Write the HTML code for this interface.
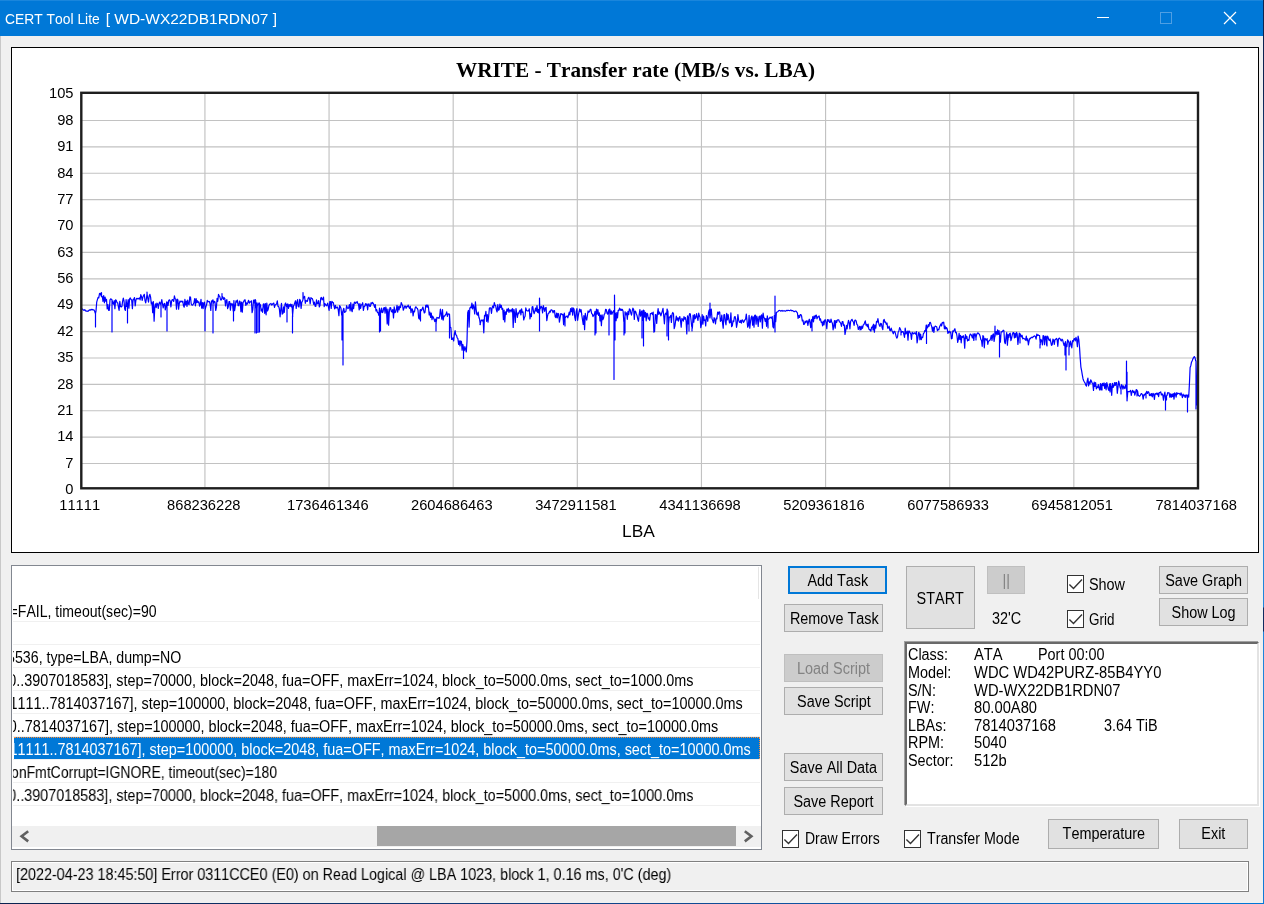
<!DOCTYPE html>
<html lang="en"><head><meta charset="utf-8"><title>CERT Tool Lite</title><style>
html,body{margin:0;padding:0}
body{font-kerning:none;width:1264px;height:904px;background:#f0f0f0;position:relative;overflow:hidden;font-family:"Liberation Sans",Arial,sans-serif;font-size:16px;color:#000}
#w{position:absolute;left:0;top:0;width:1264px;height:904px;will-change:transform}
#tb{position:absolute;left:0;top:0;width:1263px;height:36px;background:#0078d7;border-top:1px solid #1a86dc;box-sizing:border-box}
#title{position:absolute;left:5px;top:9px;font-size:15.5px;line-height:20px;color:#fff;white-space:nowrap;transform-origin:left center}
#chartbox{position:absolute;left:11px;top:47px;width:1248px;height:506px;box-sizing:border-box;border:1px solid #000;background:#fff}
.t{position:absolute;white-space:nowrap;font-size:16px;line-height:20px;transform-origin:left center}
.btn{position:absolute;box-sizing:border-box;border:1px solid #adadad;background:#e1e1e1;text-align:center;white-space:nowrap;font-size:16px;color:#000}
.btn.focus{border:2px solid #0078d7}
.btn.dis{background:#cccccc;border-color:#bfbfbf;color:#838383}
.chk{position:absolute;width:17px;height:18px;box-sizing:border-box;border:1px solid #333;background:#fff}
.chk svg{position:absolute;left:0;top:0}
#list{position:absolute;left:11px;top:565px;width:751px;height:285px;box-sizing:border-box;border:1px solid #828790;background:#fff;overflow:hidden}
#listclip{position:absolute;left:1px;top:0;width:747px;height:258px;overflow:hidden}
.rl{position:absolute;left:1px;width:747px;height:1px;background:#f0f0f0}
.sel{position:absolute;left:2px;top:0;width:746px;height:22px;box-sizing:border-box;background:#0078d7;border-top:1px dotted #ff8c32;border-right:1px dotted #ff8c32}
#hsb{position:absolute;left:0;top:260px;width:749px;height:21px;background:#f0f0f0}
#thumb{position:absolute;left:365px;top:0;width:359px;height:20px;background:#a6a6a6}
#info{position:absolute;left:905px;top:642px;width:354px;height:164px;box-sizing:border-box;background:#fff;border:2px solid;border-color:#696969 #e3e3e3 #e3e3e3 #696969;box-shadow:-1px -1px 0 #a0a0a0, 1px 1px 0 #fff;overflow:hidden}
#status{position:absolute;left:11px;top:861px;width:1238px;height:31px;box-sizing:border-box;border:1px solid #808080;box-shadow:inset 0 0 0 1px #fff}
#edgeL{position:absolute;left:0;top:36px;width:1px;height:868px;background:#c8c8c8}
#edgeR2{position:absolute;left:1263px;top:0;width:1px;height:904px;background:linear-gradient(to bottom,#0c2350 0,#0c2350 90px,#1b6fc2 230px,#1f86dc 300px,#1f86dc 607px,#102c60 608px,#102c60 631px,#1f86dc 632px,#0f7ad6 904px)}
#edgeB{position:absolute;left:0;top:903px;width:1264px;height:1px;background:linear-gradient(to right,#0b2350 0,#103c7c 40%,#0f5fb4 75%,#0078d7 100%)}
</style></head><body>
<div id="w">
<div id="tb"></div>
<div id="title"><span style="display:inline-block;transform:scaleX(0.894);transform-origin:left center">CERT Tool Lite</span><span style="position:absolute;left:100.7px;top:0">[ WD-WX22DB1RDN07 ]</span></div>
<svg style="position:absolute;left:1090px;top:0" width="170" height="36" viewBox="1090 0 170 36"><path d="M1097 17.5H1109" stroke="#fff" stroke-width="1"/><rect x="1160.5" y="12.5" width="11" height="11" fill="none" stroke="#4f9fe3" stroke-width="1"/><path d="M1224 12L1236 24M1236 12L1224 24" stroke="#fff" stroke-width="1.2"/></svg>
<div id="chartbox"></div>
<svg width="1264" height="904" viewBox="0 0 1264 904" style="position:absolute;left:0;top:0;font-kerning:none" font-family="Liberation Sans, Arial, sans-serif">
<path d="M204.93 94V487M329.06 94V487M453.19 94V487M577.32 94V487M701.45 94V487M825.58 94V487M949.71 94V487M1073.84 94V487M82 120.48H1197M82 146.87H1197M82 173.25H1197M82 199.64H1197M82 226.03H1197M82 252.41H1197M82 278.80H1197M82 305.18H1197M82 331.56H1197M82 357.95H1197M82 384.34H1197M82 410.72H1197M82 437.11H1197M82 463.49H1197" stroke="#c2c2c2" stroke-width="1.15" fill="none"/>
<path d="M82.0 308.6 L82.7 309.4 L83.4 310.2 L84.1 310.2 L84.8 309.6 L85.5 311.0 L86.2 310.9 L86.9 311.3 L87.6 311.1 L88.3 311.2 L89.0 310.2 L89.7 309.9 L90.4 310.1 L91.1 309.3 L91.8 309.9 L92.5 309.4 L93.2 310.0 L93.9 309.9 L94.6 311.0 L95.3 313.3 L95.5 313.3 L95.5 327.0 L95.5 313.3 L96.0 311.1 L96.7 302.2 L97.4 299.6 L98.1 297.4 L98.8 297.9 L99.5 293.5 L100.2 293.2 L100.9 295.3 L101.6 296.7 L101.5 292.5 L101.5 292.5 L101.5 296.7 L102.3 296.5 L103.0 301.3 L103.7 295.5 L104.4 302.8 L105.1 297.0 L105.8 301.1 L106.5 299.3 L107.2 308.9 L107.9 304.6 L108.6 310.3 L109.3 310.3 L110.0 299.8 L110.7 298.9 L111.4 299.2 L112.1 300.2 L112.0 300.2 L112.0 332.0 L112.0 300.2 L112.8 302.9 L113.5 304.2 L114.2 300.6 L114.9 308.7 L115.6 299.8 L116.3 300.4 L117.0 302.6 L117.7 302.9 L118.4 306.9 L119.1 310.4 L119.8 301.3 L120.5 306.6 L121.2 307.0 L121.9 306.5 L122.6 301.3 L123.3 298.2 L124.0 300.8 L124.7 308.9 L125.4 310.5 L126.1 299.7 L126.8 306.4 L127.5 304.4 L127.5 304.4 L127.5 323.0 L127.5 304.4 L128.2 299.7 L128.9 308.2 L129.6 298.8 L130.3 297.9 L131.0 299.4 L131.7 300.2 L132.4 308.7 L133.1 299.4 L133.8 299.6 L134.5 297.5 L135.2 306.0 L135.9 300.2 L136.6 298.4 L137.3 298.4 L138.0 299.1 L138.7 298.4 L139.4 297.9 L140.1 299.9 L140.8 294.7 L141.5 296.6 L142.2 300.5 L142.9 297.1 L143.6 295.6 L144.3 294.3 L145.0 300.5 L145.7 302.9 L146.4 298.6 L147.1 293.5 L147.0 292.0 L147.0 292.0 L147.0 293.5 L147.8 298.5 L148.5 302.1 L149.2 295.9 L149.9 294.3 L150.6 297.1 L151.3 304.0 L152.0 302.1 L152.7 312.6 L153.4 301.7 L154.1 321.2 L154.8 307.1 L155.5 303.8 L156.2 307.6 L156.9 303.0 L157.6 304.1 L158.3 308.3 L159.0 303.5 L159.7 302.1 L160.4 304.2 L161.1 303.6 L161.0 303.6 L161.0 317.0 L161.0 303.6 L161.8 299.6 L162.5 304.0 L163.2 307.8 L163.9 303.9 L164.6 303.4 L165.3 310.0 L166.0 305.8 L166.7 301.9 L167.0 301.9 L167.0 331.0 L167.0 301.9 L167.4 302.3 L168.1 305.5 L168.8 300.2 L169.5 299.9 L170.2 301.0 L170.9 306.9 L171.6 301.3 L172.3 299.5 L173.0 299.8 L173.7 301.5 L174.4 295.8 L175.1 298.7 L175.8 299.4 L176.5 309.1 L177.2 299.2 L177.9 299.9 L178.6 309.1 L179.3 303.5 L180.0 301.0 L180.7 301.8 L181.4 301.1 L182.1 302.0 L182.8 301.2 L183.5 305.8 L184.2 307.2 L184.9 299.3 L185.6 305.0 L186.3 301.1 L187.0 306.5 L187.7 300.1 L188.4 304.0 L189.1 304.6 L189.8 296.9 L190.5 297.0 L191.2 303.7 L191.9 305.1 L192.6 305.2 L193.3 304.1 L194.0 302.4 L194.7 298.7 L195.4 305.8 L196.1 298.7 L196.8 302.7 L197.5 300.7 L198.2 302.6 L198.9 301.9 L199.6 306.1 L200.3 304.4 L201.0 299.3 L201.7 308.1 L202.4 302.6 L203.1 308.6 L203.8 302.9 L204.5 302.1 L205.2 309.7 L205.0 309.7 L205.0 331.0 L205.0 309.7 L205.9 306.9 L206.6 304.6 L207.3 300.4 L208.0 301.8 L208.7 301.4 L209.4 301.5 L210.1 304.0 L210.8 310.5 L211.5 300.9 L212.2 301.6 L212.9 299.8 L213.0 299.8 L213.0 333.0 L213.0 299.8 L213.6 303.1 L214.3 301.3 L215.0 302.0 L215.7 310.5 L216.4 307.4 L217.1 298.4 L217.8 301.3 L218.5 294.4 L219.2 295.8 L219.9 296.9 L220.6 299.8 L221.3 300.0 L222.0 297.9 L222.0 293.5 L222.0 293.5 L222.0 297.9 L222.7 296.8 L223.4 299.4 L224.1 297.7 L224.8 298.5 L225.5 306.0 L226.2 300.6 L226.9 299.7 L227.6 308.6 L228.3 306.7 L229.0 301.7 L229.7 301.7 L230.4 310.1 L231.1 303.4 L231.8 304.9 L232.5 303.9 L233.2 311.0 L233.5 311.0 L233.5 321.0 L233.5 311.0 L233.9 300.6 L234.6 310.6 L235.3 306.1 L236.0 300.9 L236.7 302.1 L237.4 300.0 L238.1 305.6 L238.8 305.7 L239.5 301.0 L240.2 301.8 L240.9 311.7 L241.6 302.0 L242.3 312.2 L243.0 302.7 L243.7 301.7 L244.4 300.1 L245.1 299.8 L245.8 305.5 L246.5 302.8 L247.2 304.1 L247.9 302.3 L248.6 300.3 L249.3 303.2 L250.0 301.9 L250.7 302.0 L251.4 300.8 L252.1 312.6 L252.8 309.7 L253.5 300.2 L254.2 303.0 L254.9 299.5 L255.0 299.5 L255.0 333.0 L255.0 299.5 L255.6 300.1 L256.3 308.1 L256.5 308.1 L256.5 333.0 L256.5 308.1 L257.0 302.9 L257.7 305.6 L258.0 305.6 L258.0 332.5 L258.0 305.6 L258.4 304.2 L259.1 302.8 L259.8 304.2 L259.5 304.2 L259.5 332.0 L259.5 304.2 L260.5 304.7 L261.2 311.0 L261.9 309.1 L262.6 312.3 L263.3 304.0 L264.0 303.8 L264.7 313.3 L265.4 303.6 L266.1 314.8 L266.8 303.0 L267.5 310.9 L268.2 309.2 L268.9 305.6 L269.6 304.2 L270.3 304.0 L271.0 303.5 L271.7 305.1 L272.4 304.3 L273.1 303.5 L273.8 303.1 L274.5 307.4 L275.2 304.9 L275.9 304.5 L276.6 303.8 L277.3 300.9 L278.0 306.4 L278.7 306.5 L279.4 309.2 L280.1 316.8 L280.8 309.3 L281.5 303.3 L282.2 314.1 L282.9 313.6 L283.6 306.8 L284.3 312.3 L285.0 304.1 L285.7 303.0 L286.4 306.5 L287.1 304.6 L287.0 304.6 L287.0 322.0 L287.0 304.6 L287.8 303.8 L288.5 308.3 L289.2 304.5 L289.9 306.2 L290.6 304.1 L291.3 306.9 L292.0 304.3 L292.7 316.4 L292.5 316.4 L292.5 333.0 L292.5 316.4 L293.4 306.3 L294.1 304.7 L294.8 302.6 L295.5 300.8 L296.2 308.4 L296.9 302.1 L297.6 299.7 L298.3 306.7 L299.0 307.0 L299.7 299.4 L300.4 300.5 L301.1 308.4 L301.8 302.3 L302.5 301.0 L303.2 298.9 L303.0 292.5 L303.0 292.5 L303.0 298.9 L303.9 297.5 L304.6 296.3 L305.3 303.3 L306.0 300.4 L306.7 301.2 L307.4 301.4 L308.1 298.3 L308.8 297.3 L309.5 299.0 L310.2 303.8 L310.9 297.7 L311.6 298.3 L312.3 298.6 L313.0 300.6 L313.7 304.3 L314.4 302.1 L315.1 306.1 L315.8 306.4 L316.5 299.8 L317.2 303.8 L317.9 303.4 L318.6 300.7 L319.3 306.9 L320.0 305.4 L320.7 298.2 L321.4 297.4 L322.1 299.9 L322.8 298.9 L323.5 297.1 L324.2 306.7 L324.9 303.7 L325.6 304.4 L326.3 305.8 L327.0 305.0 L327.7 303.1 L328.4 306.9 L329.1 310.4 L329.8 301.6 L330.5 301.7 L331.2 308.4 L331.9 301.4 L332.6 302.2 L333.3 302.5 L334.0 306.0 L334.7 308.8 L335.4 305.3 L336.1 308.0 L336.8 307.5 L337.5 307.1 L338.2 309.5 L338.9 315.7 L339.6 305.7 L340.3 306.7 L341.0 308.4 L341.7 315.3 L342.0 315.3 L342.0 340.0 L342.0 315.3 L342.4 312.5 L343.1 310.6 L343.0 310.6 L343.0 365.0 L343.0 310.6 L343.8 308.3 L344.5 312.3 L345.2 312.0 L345.9 311.3 L346.6 305.6 L347.3 307.5 L348.0 308.6 L348.7 307.6 L349.4 304.6 L350.1 310.8 L350.8 302.7 L351.5 309.7 L352.2 311.7 L352.9 304.1 L353.6 308.6 L354.3 302.6 L355.0 302.1 L355.7 303.4 L356.4 302.5 L357.1 301.5 L357.8 303.5 L358.5 304.2 L359.2 309.9 L359.9 303.6 L360.6 308.3 L361.3 304.9 L362.0 304.6 L362.7 302.7 L363.4 310.5 L364.1 306.3 L364.8 306.3 L365.5 303.7 L366.2 305.2 L366.9 303.9 L367.6 309.8 L368.3 304.4 L369.0 303.8 L369.7 306.4 L370.4 306.4 L371.1 302.7 L371.8 303.8 L372.5 302.4 L373.2 303.3 L373.9 304.8 L374.6 307.4 L375.3 304.5 L376.0 311.0 L376.7 309.6 L377.4 312.4 L378.1 312.7 L378.8 315.3 L379.5 308.1 L379.5 308.1 L379.5 332.0 L379.5 308.1 L380.2 312.2 L380.5 312.2 L380.5 331.0 L380.5 312.2 L380.9 312.4 L381.6 308.0 L382.3 312.6 L383.0 312.0 L383.7 308.0 L384.4 307.6 L385.1 313.2 L385.8 307.0 L386.5 310.0 L387.2 323.9 L387.9 309.0 L388.6 325.2 L389.3 312.0 L390.0 307.6 L390.7 307.9 L391.4 311.6 L392.1 312.1 L392.8 309.5 L393.5 317.9 L394.2 306.8 L394.9 312.7 L395.6 312.0 L396.3 309.5 L397.0 305.3 L397.7 312.1 L398.4 306.5 L399.1 309.8 L399.8 306.0 L400.5 307.6 L401.2 302.6 L401.9 304.3 L402.6 305.4 L403.3 310.2 L404.0 308.4 L404.7 306.0 L405.4 306.2 L406.1 308.4 L406.8 306.4 L407.5 306.7 L408.2 305.1 L408.9 307.3 L409.6 308.5 L410.3 306.2 L411.0 312.6 L411.7 308.9 L412.4 309.1 L413.1 316.0 L413.8 311.0 L414.5 311.9 L415.2 307.8 L415.9 306.7 L416.6 308.0 L417.3 308.3 L418.0 310.3 L418.7 318.2 L419.4 319.1 L420.1 309.8 L420.8 309.7 L420.5 309.7 L420.5 321.0 L420.5 309.7 L421.5 310.6 L422.2 308.8 L422.9 307.0 L423.6 310.1 L424.3 313.0 L425.0 312.3 L425.7 305.6 L426.4 305.1 L427.1 307.3 L427.8 305.0 L428.5 307.5 L429.2 315.0 L429.9 312.1 L430.6 317.4 L431.3 313.2 L432.0 319.6 L432.7 316.2 L433.4 317.5 L434.1 319.3 L434.8 321.6 L435.5 319.2 L436.2 323.4 L436.0 323.4 L436.0 331.0 L436.0 323.4 L436.9 317.3 L437.6 318.0 L438.3 317.7 L439.0 318.4 L439.7 316.1 L440.4 309.1 L441.1 313.7 L441.8 319.1 L442.5 309.5 L443.2 320.2 L443.9 316.0 L444.6 316.1 L445.3 315.1 L446.0 314.2 L446.7 311.9 L447.4 316.3 L448.1 313.9 L448.8 314.2 L449.5 314.2 L449.5 314.2 L449.5 338.0 L449.5 314.2 L450.2 327.4 L450.9 327.5 L451.6 339.4 L452.3 339.3 L453.0 337.8 L453.7 341.0 L454.4 334.1 L455.1 330.5 L455.8 334.8 L456.5 335.2 L457.2 337.9 L457.9 338.6 L458.6 344.5 L459.3 340.9 L460.0 346.0 L460.7 340.9 L461.4 341.4 L462.1 350.2 L462.8 344.4 L463.5 347.6 L463.5 347.6 L463.5 358.5 L463.5 347.6 L464.2 350.7 L464.9 346.7 L465.6 349.1 L466.3 352.0 L467.0 341.2 L467.7 312.6 L468.4 310.4 L469.1 327.1 L469.8 308.3 L470.5 307.1 L471.2 307.8 L471.9 303.1 L472.6 308.9 L473.3 304.8 L474.0 307.4 L474.7 314.0 L475.4 301.9 L476.1 309.0 L476.8 314.4 L477.5 315.1 L478.2 312.2 L478.9 317.3 L479.6 319.2 L480.3 324.6 L480.0 324.0 L480.0 324.0 L480.0 324.6 L481.0 320.9 L481.7 320.0 L482.4 320.9 L483.1 319.7 L483.8 332.8 L484.5 315.4 L485.2 315.9 L485.9 311.3 L486.6 321.3 L487.3 314.5 L488.0 322.2 L488.7 315.8 L489.4 308.2 L490.1 307.7 L490.8 308.4 L491.5 313.3 L492.2 307.2 L492.9 305.8 L493.6 307.9 L494.3 302.6 L495.0 305.2 L495.7 305.8 L496.4 309.9 L497.1 312.0 L497.8 304.6 L498.5 310.2 L499.2 309.8 L499.9 304.1 L500.6 307.7 L501.3 305.4 L502.0 309.3 L502.7 308.4 L503.4 319.7 L504.1 310.0 L504.8 321.9 L505.5 311.8 L506.2 314.3 L506.9 309.2 L507.6 311.1 L508.3 308.4 L509.0 312.4 L509.7 309.8 L510.4 310.3 L511.1 311.9 L511.8 309.5 L512.5 308.6 L513.2 327.5 L513.9 309.4 L514.6 313.2 L515.3 322.5 L516.0 308.6 L516.7 313.4 L517.4 317.5 L518.1 312.8 L518.8 313.6 L519.5 311.0 L520.2 310.0 L520.9 314.9 L521.6 308.8 L522.3 312.3 L523.0 311.8 L523.7 320.0 L524.4 317.5 L525.1 316.2 L525.8 307.8 L526.5 310.4 L527.2 310.8 L527.9 310.8 L528.6 311.0 L529.3 308.8 L530.0 319.0 L530.7 313.8 L531.4 316.7 L532.1 307.1 L532.8 306.6 L533.5 311.6 L534.2 313.7 L534.9 310.9 L535.6 308.0 L536.3 311.3 L537.0 305.6 L537.7 312.5 L538.4 309.3 L539.1 313.5 L539.8 310.0 L539.5 298.0 L539.5 298.0 L539.5 310.0 L539.5 310.0 L539.5 331.0 L539.5 310.0 L540.5 307.9 L541.2 306.3 L541.9 307.6 L542.6 313.0 L543.3 305.7 L544.0 308.1 L544.7 311.3 L545.4 308.0 L546.1 307.3 L546.8 320.7 L547.5 316.2 L548.2 313.4 L548.9 313.2 L549.6 311.2 L550.3 312.0 L551.0 309.9 L551.7 309.8 L552.4 310.7 L553.1 312.8 L553.8 310.7 L554.5 310.6 L555.2 316.9 L555.9 317.5 L556.6 313.1 L557.3 317.9 L558.0 313.4 L558.7 314.0 L559.4 322.2 L560.1 317.8 L560.8 313.6 L561.5 313.8 L562.2 314.7 L562.9 314.3 L563.6 324.6 L564.3 313.1 L565.0 318.0 L565.0 318.0 L565.0 326.0 L565.0 318.0 L565.7 317.2 L566.4 316.5 L567.1 315.9 L567.8 317.8 L568.5 315.4 L569.2 312.2 L569.9 315.0 L570.6 308.6 L571.3 311.6 L572.0 307.6 L572.7 315.1 L573.4 308.1 L574.1 309.3 L574.8 317.4 L575.5 320.7 L576.2 311.3 L576.9 308.7 L577.6 320.3 L578.3 315.6 L579.0 311.8 L579.7 309.0 L580.4 311.9 L581.1 309.7 L581.8 315.2 L582.5 319.7 L583.2 324.4 L583.9 315.5 L584.6 329.6 L585.3 313.3 L586.0 318.6 L586.7 320.1 L587.4 315.4 L588.1 310.9 L588.8 312.3 L589.5 311.6 L590.2 309.3 L590.9 309.4 L591.6 313.4 L592.3 314.2 L593.0 316.6 L593.7 315.2 L594.4 314.0 L595.1 311.3 L595.0 311.3 L595.0 335.0 L595.0 311.3 L595.8 316.0 L596.0 316.0 L596.0 333.0 L596.0 316.0 L596.5 309.0 L597.2 314.1 L597.9 309.5 L598.6 315.4 L599.3 312.9 L600.0 321.0 L600.7 315.0 L601.4 325.6 L602.1 314.8 L602.8 319.6 L603.5 318.3 L604.2 314.4 L604.9 313.6 L605.6 309.4 L606.3 309.6 L607.0 313.2 L607.7 314.2 L608.4 311.3 L609.1 309.6 L609.0 309.6 L609.0 335.0 L609.0 309.6 L609.8 309.1 L610.5 314.2 L611.2 310.8 L611.9 314.3 L612.6 312.4 L613.3 311.4 L614.0 310.4 L614.0 310.4 L614.0 379.5 L614.0 310.4 L614.7 313.5 L614.5 295.0 L614.5 295.0 L614.5 313.5 L615.0 313.5 L615.0 340.0 L615.0 313.5 L615.4 313.2 L616.1 320.6 L616.8 312.7 L617.5 318.0 L618.2 310.4 L618.9 310.3 L619.6 308.1 L620.3 310.3 L621.0 309.1 L621.7 310.4 L622.4 309.4 L623.1 311.2 L623.8 321.4 L624.0 321.4 L624.0 335.0 L624.0 321.4 L624.5 322.8 L625.2 311.9 L625.0 311.9 L625.0 333.0 L625.0 311.9 L625.9 314.8 L626.6 312.8 L627.3 319.3 L628.0 311.3 L628.7 314.6 L629.4 308.9 L630.1 309.4 L630.8 313.0 L631.5 315.1 L632.2 311.0 L632.9 308.2 L633.6 309.3 L634.3 319.4 L635.0 311.0 L635.7 311.7 L636.4 313.9 L637.1 315.8 L637.8 319.2 L638.5 321.3 L639.2 314.4 L639.9 309.6 L640.6 316.1 L641.3 312.1 L642.0 310.8 L642.0 310.8 L642.0 338.0 L642.0 310.8 L642.7 320.4 L643.4 310.1 L643.5 310.1 L643.5 346.0 L643.5 310.1 L644.1 310.6 L644.8 317.2 L645.5 312.4 L646.2 320.8 L646.9 313.3 L647.6 313.9 L648.3 319.0 L649.0 317.8 L649.7 320.3 L650.4 313.6 L651.1 313.6 L651.8 312.8 L652.5 314.6 L653.2 312.2 L653.9 332.2 L654.6 331.4 L655.3 314.5 L656.0 314.8 L656.7 323.5 L657.4 314.0 L658.1 308.6 L658.8 314.4 L659.5 312.0 L660.2 313.5 L660.9 315.8 L661.6 313.4 L662.3 311.1 L663.0 308.3 L663.7 315.8 L664.4 323.8 L665.1 314.2 L665.8 313.1 L666.5 314.7 L667.2 309.1 L667.0 309.1 L667.0 336.0 L667.0 309.1 L667.9 311.3 L668.6 324.4 L668.5 324.4 L668.5 340.0 L668.5 324.4 L669.3 317.0 L670.0 317.2 L670.7 315.4 L671.4 322.5 L672.1 313.9 L672.8 312.5 L673.5 313.8 L674.2 328.7 L674.9 326.2 L675.6 320.8 L676.3 316.2 L677.0 320.1 L677.7 317.9 L678.4 321.1 L679.1 317.8 L679.8 316.6 L680.5 320.7 L681.2 327.1 L681.9 318.4 L682.6 319.6 L683.3 321.1 L684.0 316.6 L684.7 319.2 L685.4 317.5 L686.1 321.2 L686.8 334.0 L687.5 315.8 L688.2 324.0 L688.9 316.5 L689.0 316.5 L689.0 331.0 L689.0 316.5 L689.6 313.7 L690.3 313.8 L691.0 319.8 L691.7 326.5 L692.0 326.5 L692.0 331.0 L692.0 326.5 L692.4 328.1 L693.1 315.1 L693.8 322.2 L694.5 314.7 L695.2 318.7 L695.9 317.3 L696.6 313.7 L697.3 317.7 L698.0 320.5 L698.7 313.2 L699.4 316.1 L700.1 317.3 L700.8 327.7 L701.5 324.3 L702.2 314.7 L702.9 324.1 L703.6 316.1 L704.3 320.5 L705.0 319.9 L705.7 325.9 L706.4 315.5 L707.1 318.1 L707.8 321.3 L708.5 312.6 L709.2 309.8 L709.9 317.9 L710.0 303.0 L710.0 303.0 L710.0 317.9 L710.6 313.9 L711.3 309.2 L712.0 318.8 L712.7 320.6 L713.4 322.8 L714.1 317.6 L714.8 319.4 L715.5 323.9 L716.2 318.2 L716.9 318.8 L717.6 312.2 L718.3 314.3 L719.0 311.8 L719.7 312.1 L720.4 321.3 L721.1 320.6 L721.8 315.1 L722.5 322.6 L723.2 328.1 L723.9 314.8 L724.6 314.6 L725.3 321.7 L726.0 324.8 L726.7 313.3 L727.4 319.9 L728.1 314.7 L728.8 319.1 L729.5 323.0 L730.2 322.5 L730.9 312.8 L731.6 326.6 L732.3 325.9 L733.0 320.9 L733.7 321.6 L734.4 317.0 L735.1 316.6 L735.8 319.5 L736.5 327.3 L737.2 323.6 L737.9 314.5 L738.6 319.9 L739.3 322.2 L740.0 322.5 L740.7 320.4 L741.4 323.1 L742.1 319.9 L742.8 320.2 L743.5 322.4 L744.2 321.2 L744.9 319.9 L745.6 319.1 L746.3 314.0 L747.0 320.6 L747.7 327.2 L748.4 325.5 L749.1 315.3 L749.8 328.1 L750.5 321.5 L751.2 317.3 L751.9 316.0 L752.6 325.1 L753.3 316.9 L754.0 327.2 L754.7 315.4 L755.4 315.2 L756.1 324.2 L756.8 316.1 L757.5 319.2 L758.2 326.5 L758.9 316.8 L759.6 316.1 L760.3 322.0 L761.0 315.6 L761.7 314.8 L762.4 328.1 L763.1 313.1 L763.8 317.5 L764.5 318.1 L765.2 321.4 L765.9 318.5 L766.6 326.3 L767.3 315.8 L768.0 319.9 L768.0 319.9 L768.0 328.0 L768.0 319.9 L768.7 319.0 L769.4 318.3 L770.1 317.1 L770.8 317.8 L771.5 318.2 L772.2 316.5 L772.9 326.7 L773.6 327.9 L774.3 315.6 L775.0 315.5 L775.0 296.0 L775.0 296.0 L775.0 315.5 L775.0 315.5 L775.0 332.0 L775.0 315.5 L775.7 321.6 L776.4 312.4 L777.1 312.0 L777.8 311.7 L778.5 310.8 L779.2 310.4 L779.9 310.5 L780.6 311.1 L781.3 310.9 L782.0 310.4 L782.7 311.1 L783.4 310.8 L784.1 310.9 L784.8 310.9 L785.5 311.2 L786.2 310.8 L786.9 310.3 L787.6 310.6 L788.3 310.3 L789.0 310.5 L789.7 310.7 L790.4 310.2 L791.1 310.1 L791.8 310.8 L792.5 310.5 L793.2 311.1 L793.9 311.6 L794.6 311.6 L795.3 311.0 L796.0 311.2 L796.7 312.0 L797.4 312.9 L798.1 318.3 L798.8 315.5 L799.5 317.5 L800.2 314.6 L800.9 314.6 L801.6 316.1 L802.3 321.0 L803.0 320.2 L803.7 324.5 L804.4 324.2 L805.1 321.2 L805.8 322.7 L806.5 320.9 L807.2 320.8 L807.9 325.3 L808.6 321.3 L809.3 319.2 L810.0 322.7 L810.7 327.6 L811.4 319.5 L812.1 322.1 L812.0 322.1 L812.0 331.0 L812.0 322.1 L812.8 316.7 L813.5 321.8 L814.2 315.8 L814.9 318.5 L815.6 315.5 L816.3 315.1 L817.0 318.9 L817.7 316.9 L818.4 317.0 L819.1 315.9 L819.8 320.2 L820.5 318.9 L821.2 322.3 L821.9 322.1 L822.6 325.9 L823.3 321.2 L824.0 325.0 L824.7 320.1 L825.4 319.8 L826.1 322.3 L826.8 328.7 L827.5 319.5 L828.2 321.2 L828.9 319.7 L829.6 322.5 L830.3 322.5 L831.0 319.2 L831.7 322.0 L832.4 323.2 L833.1 329.8 L833.8 325.9 L834.5 320.5 L835.2 328.1 L835.9 320.5 L836.6 322.5 L837.3 320.0 L838.0 319.8 L838.7 319.8 L839.4 321.7 L840.1 322.3 L840.8 323.5 L841.5 326.3 L842.2 321.5 L842.9 321.7 L843.6 325.5 L844.3 324.9 L845.0 334.5 L845.0 329.0 L845.0 329.0 L845.0 334.5 L845.7 330.9 L846.4 325.3 L847.1 328.9 L847.8 323.8 L848.5 320.3 L849.2 322.7 L849.9 328.8 L850.6 321.6 L851.3 320.2 L852.0 319.3 L852.7 321.1 L853.4 322.0 L854.1 325.5 L854.8 320.4 L855.5 320.2 L856.2 321.2 L856.9 324.5 L857.6 324.9 L858.3 329.5 L859.0 327.8 L859.7 326.3 L860.0 326.3 L860.0 330.0 L860.0 326.3 L860.4 326.9 L861.1 329.6 L861.8 326.2 L862.5 328.3 L863.2 325.1 L863.9 324.6 L864.6 322.6 L865.3 320.9 L866.0 325.1 L866.7 324.5 L867.4 326.8 L868.1 324.1 L868.8 328.9 L869.5 329.8 L870.2 329.7 L870.9 331.2 L871.6 327.1 L872.3 327.7 L873.0 325.4 L873.0 325.4 L873.0 330.0 L873.0 325.4 L873.7 324.2 L874.4 332.2 L875.1 325.1 L875.8 328.2 L876.5 321.3 L877.2 322.2 L877.9 318.6 L878.6 322.7 L879.3 325.3 L880.0 326.4 L880.7 323.4 L881.4 323.7 L882.1 327.5 L882.8 329.6 L883.5 320.3 L884.2 319.4 L884.9 322.4 L885.6 322.1 L886.3 324.3 L887.0 323.1 L887.7 328.1 L888.4 327.9 L889.1 326.2 L889.8 330.3 L890.5 330.7 L891.2 328.1 L891.9 330.4 L892.6 331.9 L893.3 333.8 L894.0 331.4 L894.7 331.3 L895.4 333.3 L896.1 336.2 L896.8 338.1 L897.5 337.0 L898.2 332.0 L898.9 331.0 L899.6 327.5 L900.3 328.9 L901.0 330.8 L901.0 330.8 L901.0 335.0 L901.0 330.8 L901.7 332.5 L902.4 331.5 L903.1 331.7 L903.8 334.1 L904.5 337.5 L905.2 328.1 L905.9 333.9 L906.6 332.7 L907.3 331.0 L908.0 340.2 L908.7 331.0 L909.4 331.2 L910.1 332.9 L910.8 333.8 L911.5 339.3 L912.2 332.3 L912.9 333.3 L913.6 333.9 L914.3 332.9 L915.0 333.1 L915.7 334.1 L916.4 331.7 L917.1 342.9 L917.8 338.4 L918.5 332.7 L919.2 332.9 L919.9 339.8 L920.6 334.1 L921.3 339.6 L922.0 337.1 L922.7 337.5 L923.4 333.6 L924.1 332.9 L924.8 330.5 L925.5 331.2 L926.2 325.2 L926.5 325.2 L926.5 343.5 L926.5 325.2 L926.9 328.0 L927.6 327.9 L928.3 324.5 L929.0 326.3 L929.7 322.5 L930.4 322.3 L931.1 324.7 L931.8 326.9 L932.5 331.1 L933.2 327.0 L933.9 332.3 L934.6 327.0 L935.3 326.0 L936.0 326.4 L936.7 326.8 L937.4 330.7 L938.1 329.3 L938.8 329.9 L939.5 327.1 L940.2 325.4 L940.9 323.9 L941.6 326.0 L942.3 322.4 L943.0 322.9 L943.7 322.1 L944.4 328.8 L945.1 326.2 L945.8 329.0 L946.5 327.6 L947.2 328.7 L947.9 333.4 L948.6 332.2 L949.3 331.2 L950.0 332.8 L950.7 331.8 L951.4 338.8 L952.1 338.5 L952.8 330.9 L953.5 331.6 L954.2 330.0 L954.9 328.7 L955.6 332.7 L956.3 332.4 L957.0 336.0 L957.7 342.4 L958.4 339.2 L959.1 333.3 L959.8 339.5 L960.0 336.0 L960.0 336.0 L960.0 339.5 L960.5 335.3 L961.2 342.8 L961.9 336.3 L962.6 337.4 L963.3 335.7 L964.0 338.2 L964.7 348.1 L965.4 334.5 L966.1 338.4 L966.8 336.2 L967.5 340.9 L968.2 339.6 L968.9 340.4 L969.6 335.7 L970.3 334.0 L971.0 334.5 L971.7 335.9 L972.4 338.0 L973.1 333.8 L973.8 340.5 L974.5 333.8 L975.2 333.9 L975.9 338.0 L976.0 338.0 L976.0 340.0 L976.0 338.0 L976.6 334.7 L977.3 333.4 L978.0 332.8 L978.7 333.8 L979.4 334.3 L980.1 336.2 L980.8 339.5 L981.5 340.3 L982.2 346.3 L982.9 335.5 L983.6 336.6 L984.3 347.8 L985.0 338.3 L985.7 339.5 L986.4 340.1 L987.1 338.5 L987.8 344.3 L988.5 341.0 L989.2 340.8 L989.9 340.3 L990.6 338.5 L991.3 335.4 L992.0 340.5 L992.7 335.1 L993.4 333.9 L994.1 341.4 L994.8 336.3 L995.0 326.0 L995.0 326.0 L995.0 336.3 L995.5 333.0 L996.2 331.6 L996.9 335.0 L997.6 329.8 L998.3 334.5 L999.0 330.7 L999.7 335.9 L999.5 335.9 L999.5 357.0 L999.5 335.9 L1000.4 342.1 L1001.1 331.9 L1001.8 331.9 L1002.5 331.4 L1003.2 330.2 L1003.9 330.8 L1004.6 342.0 L1005.3 343.7 L1006.0 337.0 L1006.7 332.6 L1007.4 345.2 L1008.1 334.6 L1008.0 334.6 L1008.0 340.0 L1008.0 334.6 L1008.8 337.7 L1009.5 333.7 L1010.2 333.1 L1010.9 340.6 L1011.6 338.3 L1012.3 334.5 L1013.0 332.7 L1013.7 332.5 L1014.4 337.9 L1015.1 333.4 L1015.8 337.4 L1016.5 332.3 L1017.2 334.0 L1017.9 344.5 L1018.6 338.0 L1019.3 333.1 L1020.0 333.7 L1020.0 333.7 L1020.0 343.0 L1020.0 333.7 L1020.7 334.8 L1021.4 336.9 L1022.1 335.4 L1022.8 338.8 L1023.5 338.3 L1024.2 338.7 L1024.9 339.1 L1025.6 340.2 L1026.3 336.2 L1027.0 340.6 L1027.7 338.8 L1028.4 345.0 L1029.1 340.9 L1029.8 338.4 L1030.5 338.7 L1031.2 337.3 L1031.9 337.4 L1032.6 337.6 L1033.3 336.6 L1034.0 336.2 L1034.7 335.8 L1035.4 336.6 L1036.1 339.1 L1036.8 334.1 L1037.5 335.5 L1038.2 334.8 L1038.9 335.5 L1039.6 335.7 L1040.3 344.7 L1040.0 344.7 L1040.0 348.0 L1040.0 344.7 L1041.0 339.4 L1041.7 341.0 L1042.4 345.0 L1043.1 335.5 L1043.8 336.2 L1044.5 344.7 L1045.2 336.2 L1045.9 336.9 L1046.6 344.9 L1047.3 336.2 L1047.0 336.2 L1047.0 346.0 L1047.0 336.2 L1048.0 336.8 L1048.7 339.6 L1049.4 340.6 L1050.1 338.9 L1050.8 342.1 L1051.5 345.3 L1052.2 344.7 L1052.9 339.2 L1053.6 340.1 L1054.3 344.4 L1055.0 339.5 L1055.7 339.3 L1056.4 338.4 L1057.1 339.4 L1057.8 346.3 L1058.5 338.8 L1059.2 338.1 L1059.9 338.5 L1060.6 339.9 L1061.3 340.9 L1062.0 339.2 L1062.7 340.2 L1063.4 343.1 L1064.1 345.6 L1064.8 343.1 L1065.0 343.1 L1065.0 355.0 L1065.0 343.1 L1065.5 341.6 L1066.2 346.9 L1066.0 346.9 L1066.0 370.0 L1066.0 346.9 L1066.9 346.6 L1067.6 339.8 L1068.3 341.0 L1069.0 343.0 L1069.0 343.0 L1069.0 355.0 L1069.0 343.0 L1069.7 346.6 L1070.4 341.2 L1071.1 344.2 L1071.8 347.9 L1072.5 340.7 L1073.2 341.7 L1073.9 339.1 L1074.6 338.6 L1075.3 340.9 L1076.0 337.4 L1076.7 340.1 L1077.4 346.7 L1078.1 336.1 L1078.8 339.6 L1079.5 346.9 L1080.2 358.0 L1080.9 367.1 L1081.6 370.6 L1082.3 374.8 L1083.0 378.7 L1083.7 380.7 L1084.4 382.0 L1085.1 383.1 L1085.8 385.2 L1086.5 386.0 L1087.2 380.9 L1087.9 378.1 L1088.6 385.9 L1089.3 381.9 L1090.0 383.8 L1090.7 379.8 L1091.4 381.0 L1092.1 383.1 L1092.8 383.6 L1093.5 390.4 L1094.2 382.0 L1094.9 386.3 L1095.6 382.5 L1096.3 388.8 L1097.0 386.8 L1097.7 387.5 L1098.4 384.5 L1099.1 388.3 L1099.8 390.1 L1100.5 383.6 L1101.2 389.8 L1101.9 384.1 L1102.0 384.1 L1102.0 390.0 L1102.0 384.1 L1102.6 383.5 L1103.3 385.7 L1104.0 382.8 L1104.7 388.3 L1105.4 383.7 L1106.1 389.8 L1106.8 382.6 L1107.5 385.4 L1108.2 389.0 L1108.9 390.4 L1109.6 384.3 L1110.3 383.5 L1110.0 383.5 L1110.0 392.0 L1110.0 383.5 L1111.0 386.4 L1111.7 395.3 L1112.4 383.4 L1113.1 387.5 L1113.8 386.1 L1114.5 382.5 L1115.2 385.5 L1115.9 382.7 L1116.6 382.6 L1117.3 393.3 L1118.0 387.1 L1118.7 381.1 L1119.4 384.1 L1120.1 387.4 L1120.8 389.1 L1121.0 389.1 L1121.0 394.0 L1121.0 389.1 L1121.5 384.7 L1122.2 385.7 L1122.9 389.1 L1123.6 385.8 L1124.3 388.0 L1125.0 388.7 L1125.7 384.9 L1126.4 387.3 L1126.5 361.0 L1126.5 361.0 L1126.5 387.3 L1127.1 400.8 L1127.0 372.0 L1127.0 372.0 L1127.0 400.8 L1127.8 391.7 L1128.5 391.5 L1129.2 391.8 L1129.9 391.2 L1130.6 390.5 L1131.3 395.4 L1132.0 391.7 L1132.7 390.4 L1133.4 392.5 L1134.1 391.2 L1134.8 395.2 L1135.5 392.7 L1136.2 389.6 L1136.9 390.1 L1137.0 390.1 L1137.0 396.0 L1137.0 390.1 L1137.6 391.2 L1138.3 395.3 L1139.0 395.9 L1139.7 396.3 L1140.4 395.1 L1141.1 393.7 L1141.8 393.7 L1142.5 395.1 L1143.2 399.2 L1143.9 394.6 L1144.6 395.1 L1145.3 393.6 L1146.0 393.0 L1146.0 393.0 L1146.0 398.0 L1146.0 393.0 L1146.7 391.4 L1147.4 393.5 L1148.1 391.6 L1148.8 392.2 L1149.5 395.6 L1150.2 394.1 L1150.9 395.7 L1151.6 393.5 L1152.3 396.8 L1153.0 393.4 L1153.7 394.2 L1154.4 399.4 L1155.1 393.7 L1155.8 394.1 L1156.5 393.2 L1157.2 394.6 L1157.9 393.1 L1158.6 396.7 L1159.3 392.5 L1160.0 392.3 L1160.7 391.9 L1161.4 395.0 L1162.1 393.8 L1162.8 395.2 L1163.5 400.1 L1164.2 394.6 L1164.9 392.1 L1165.6 399.9 L1165.5 399.9 L1165.5 410.0 L1165.5 399.9 L1166.3 395.8 L1166.5 395.8 L1166.5 400.0 L1166.5 395.8 L1167.0 395.5 L1167.7 392.7 L1168.4 392.8 L1169.1 392.9 L1169.8 397.1 L1170.5 393.8 L1171.2 397.3 L1171.9 394.0 L1172.6 396.7 L1173.3 393.5 L1174.0 399.2 L1174.7 392.9 L1175.4 393.9 L1176.1 397.1 L1176.8 392.6 L1177.5 394.1 L1178.2 393.5 L1178.9 393.3 L1179.6 393.7 L1180.3 395.2 L1181.0 392.8 L1181.7 394.9 L1182.4 397.7 L1183.1 394.2 L1183.8 396.0 L1184.5 395.1 L1185.2 397.5 L1185.9 394.9 L1186.6 395.0 L1187.3 397.9 L1187.5 397.9 L1187.5 412.0 L1187.5 397.9 L1188.0 394.9 L1188.7 397.1 L1189.4 384.3 L1190.1 367.4 L1190.8 365.7 L1191.5 362.2 L1192.2 360.8 L1192.9 358.9 L1193.6 357.6 L1194.3 356.6 L1195.0 357.5 L1195.7 360.8 L1196.0 360.8 L1196.0 409.0 L1196.0 360.8 L1196.4 375.5 L1196.5 375.5 L1196.5 405.0 L1196.5 375.5 L1197.1 396.3" stroke="#0000ff" stroke-width="1.2" fill="none" stroke-linejoin="round"/>
<rect x="81.3" y="92.8" width="1116.7" height="395.5" fill="none" stroke="#1e1e1e" stroke-width="2.4"/>
<text x="73.5" y="98.3" font-size="14.67" text-anchor="end" fill="#000">105</text>
<text x="73.5" y="124.7" font-size="14.67" text-anchor="end" fill="#000">98</text>
<text x="73.5" y="151.1" font-size="14.67" text-anchor="end" fill="#000">91</text>
<text x="73.5" y="177.5" font-size="14.67" text-anchor="end" fill="#000">84</text>
<text x="73.5" y="203.9" font-size="14.67" text-anchor="end" fill="#000">77</text>
<text x="73.5" y="230.2" font-size="14.67" text-anchor="end" fill="#000">70</text>
<text x="73.5" y="256.6" font-size="14.67" text-anchor="end" fill="#000">63</text>
<text x="73.5" y="283.0" font-size="14.67" text-anchor="end" fill="#000">56</text>
<text x="73.5" y="309.4" font-size="14.67" text-anchor="end" fill="#000">49</text>
<text x="73.5" y="335.8" font-size="14.67" text-anchor="end" fill="#000">42</text>
<text x="73.5" y="362.2" font-size="14.67" text-anchor="end" fill="#000">35</text>
<text x="73.5" y="388.6" font-size="14.67" text-anchor="end" fill="#000">28</text>
<text x="73.5" y="415.0" font-size="14.67" text-anchor="end" fill="#000">21</text>
<text x="73.5" y="441.4" font-size="14.67" text-anchor="end" fill="#000">14</text>
<text x="73.5" y="467.8" font-size="14.67" text-anchor="end" fill="#000">7</text>
<text x="73.5" y="494.2" font-size="14.67" text-anchor="end" fill="#000">0</text>
<text x="79.7" y="510" font-size="14.67" text-anchor="middle" fill="#000">11111</text>
<text x="203.8" y="510" font-size="14.67" text-anchor="middle" fill="#000">868236228</text>
<text x="327.8" y="510" font-size="14.67" text-anchor="middle" fill="#000">1736461346</text>
<text x="451.8" y="510" font-size="14.67" text-anchor="middle" fill="#000">2604686463</text>
<text x="575.9" y="510" font-size="14.67" text-anchor="middle" fill="#000">3472911581</text>
<text x="700.0" y="510" font-size="14.67" text-anchor="middle" fill="#000">4341136698</text>
<text x="824.0" y="510" font-size="14.67" text-anchor="middle" fill="#000">5209361816</text>
<text x="948.1" y="510" font-size="14.67" text-anchor="middle" fill="#000">6077586933</text>
<text x="1072.1" y="510" font-size="14.67" text-anchor="middle" fill="#000">6945812051</text>
<text x="1196.2" y="510" font-size="14.67" text-anchor="middle" fill="#000">7814037168</text>
<text x="638.5" y="536.6" font-size="17.33" text-anchor="middle" fill="#000">LBA</text>
<text x="635.5" y="77.4" font-size="22" font-weight="bold" text-anchor="middle" fill="#000" font-family="Liberation Serif, Times New Roman, serif" textLength="359" lengthAdjust="spacingAndGlyphs">WRITE - Transfer rate (MB/s vs. LBA)</text>
</svg>
<div id="list">
<div class="rl" style="top:55px"></div>
<div class="rl" style="top:78px"></div>
<div class="rl" style="top:101px"></div>
<div class="rl" style="top:124px"></div>
<div class="rl" style="top:147px"></div>
<div class="rl" style="top:170px"></div>
<div class="rl" style="top:193px"></div>
<div class="rl" style="top:216px"></div>
<div class="rl" style="top:239px"></div>
<div style="position:absolute;left:746px;top:1px;width:1px;height:32px;background:#e5e5e5"></div>
<div class="sel" style="top:171px"></div>
<div id="listclip">
<span class="t" style="right:603.6px;top:36px;transform:scaleX(0.879);transform-origin:right center;color:#000">onError=FAIL, timeout(sec)=90</span>
<span class="t" style="right:578.7px;top:82px;transform:scaleX(0.886);transform-origin:right center;color:#000">size=65536, type=LBA, dump=NO</span>
<span class="t" style="right:66.20000000000005px;top:105px;transform:scaleX(0.9);transform-origin:right center;color:#000">LBA=[0..3907018583], step=70000, block=2048, fua=OFF, maxErr=1024, block_to=5000.0ms, sect_to=1000.0ms</span>
<span class="t" style="right:17.5px;top:128px;transform:scaleX(0.9);transform-origin:right center;color:#000">LBA=[11111..7814037167], step=100000, block=2048, fua=OFF, maxErr=1024, block_to=50000.0ms, sect_to=10000.0ms</span>
<span class="t" style="right:42px;top:151px;transform:scaleX(0.9);transform-origin:right center;color:#000">LBA=[0..7814037167], step=100000, block=2048, fua=OFF, maxErr=1024, block_to=50000.0ms, sect_to=10000.0ms</span>
<span class="t" style="right:9.700000000000045px;top:174px;transform:scaleX(0.9);transform-origin:right center;color:#fff">LBA=[11111..7814037167], step=100000, block=2048, fua=OFF, maxErr=1024, block_to=50000.0ms, sect_to=10000.0ms</span>
<span class="t" style="right:483px;top:197px;transform:scaleX(0.875);transform-origin:right center;color:#000">onFmtCorrupt=IGNORE, timeout(sec)=180</span>
<span class="t" style="right:66.20000000000005px;top:220px;transform:scaleX(0.9);transform-origin:right center;color:#000">LBA=[0..3907018583], step=70000, block=2048, fua=OFF, maxErr=1024, block_to=5000.0ms, sect_to=1000.0ms</span>
</div>
<div id="hsb"><div id="thumb"></div><svg style="position:absolute;left:0;top:0" width="749" height="21" viewBox="0 0 749 21"><path d="M16.2 5.2L9.6 10.3L16.2 15.4" fill="none" stroke="#606060" stroke-width="2.6"/><path d="M732.8 5.2L739.4 10.3L732.8 15.4" fill="none" stroke="#606060" stroke-width="2.6"/></svg></div>
</div>
<div class="btn focus" style="left:788px;top:566px;width:99px;height:28px;line-height:26px"><span style="display:inline-block;transform:scaleX(0.9)">Add Task</span></div>
<div class="btn " style="left:784px;top:604px;width:99px;height:28px;line-height:28px"><span style="display:inline-block;transform:scaleX(0.9)">Remove Task</span></div>
<div class="btn dis" style="left:784px;top:654px;width:99px;height:28px;line-height:28px"><span style="display:inline-block;transform:scaleX(0.9)">Load Script</span></div>
<div class="btn " style="left:784px;top:687px;width:99px;height:28px;line-height:28px"><span style="display:inline-block;transform:scaleX(0.9)">Save Script</span></div>
<div class="btn " style="left:784px;top:753px;width:99px;height:28px;line-height:28px"><span style="display:inline-block;transform:scaleX(0.9)">Save All Data</span></div>
<div class="btn " style="left:784px;top:787px;width:99px;height:28px;line-height:28px"><span style="display:inline-block;transform:scaleX(0.9)">Save Report</span></div>
<div class="btn " style="left:906px;top:566px;width:69px;height:63px;line-height:63px"><span style="display:inline-block;transform:scaleX(0.9)">START</span></div>
<div class="btn dis" style="left:987px;top:566px;width:38px;height:28px;line-height:28px"><span style="display:inline-block;transform:scaleX(0.9)">||</span></div>
<div class="btn " style="left:1159px;top:566px;width:89px;height:28px;line-height:28px"><span style="display:inline-block;transform:scaleX(0.9)">Save Graph</span></div>
<div class="btn " style="left:1159px;top:598px;width:89px;height:28px;line-height:28px"><span style="display:inline-block;transform:scaleX(0.9)">Show Log</span></div>
<div class="btn " style="left:1048px;top:819px;width:111px;height:30px;line-height:27px"><span style="display:inline-block;transform:scaleX(0.9)">Temperature</span></div>
<div class="btn " style="left:1179px;top:819px;width:69px;height:30px;line-height:27px"><span style="display:inline-block;transform:scaleX(0.9)">Exit</span></div>
<span class="t" style="left:992px;top:609px;transform:scaleX(0.9);color:#000;">32'C</span>
<div class="chk" style="left:1067px;top:575px"><svg width="16" height="16" viewBox="0 0 16 16"><path d="M1.4 8.4L5.5 12.4L14 3.6" fill="none" stroke="#333" stroke-width="1.4"/></svg></div><span class="t" style="left:1089px;top:575px;transform:scaleX(0.9);color:#000;">Show</span>
<div class="chk" style="left:1067px;top:610px"><svg width="16" height="16" viewBox="0 0 16 16"><path d="M1.4 8.4L5.5 12.4L14 3.6" fill="none" stroke="#333" stroke-width="1.4"/></svg></div><span class="t" style="left:1089px;top:610px;transform:scaleX(0.84);color:#000;">Grid</span>
<div class="chk" style="left:782px;top:830px"><svg width="16" height="16" viewBox="0 0 16 16"><path d="M1.4 8.4L5.5 12.4L14 3.6" fill="none" stroke="#333" stroke-width="1.4"/></svg></div><span class="t" style="left:804.5px;top:829px;transform:scaleX(0.875);color:#000;">Draw Errors</span>
<div class="chk" style="left:904px;top:830px"><svg width="16" height="16" viewBox="0 0 16 16"><path d="M1.4 8.4L5.5 12.4L14 3.6" fill="none" stroke="#333" stroke-width="1.4"/></svg></div><span class="t" style="left:927px;top:829px;transform:scaleX(0.89);color:#000;">Transfer Mode</span>
<div id="info">
<span class="t" style="left:1.2px;top:1.4px;transform:scaleX(0.9)">Class:</span>
<span class="t" style="left:66.8px;top:1.4px;transform:scaleX(0.92)">ATA</span>
<span class="t" style="left:1.2px;top:19.0px;transform:scaleX(0.9)">Model:</span>
<span class="t" style="left:66.8px;top:19.0px;transform:scaleX(0.92)">WDC WD42PURZ-85B4YY0</span>
<span class="t" style="left:1.2px;top:36.5px;transform:scaleX(0.9)">S/N:</span>
<span class="t" style="left:66.8px;top:36.5px;transform:scaleX(0.92)">WD-WX22DB1RDN07</span>
<span class="t" style="left:1.2px;top:54.1px;transform:scaleX(0.9)">FW:</span>
<span class="t" style="left:66.8px;top:54.1px;transform:scaleX(0.92)">80.00A80</span>
<span class="t" style="left:1.2px;top:71.7px;transform:scaleX(0.9)">LBAs:</span>
<span class="t" style="left:66.8px;top:71.7px;transform:scaleX(0.92)">7814037168</span>
<span class="t" style="left:1.2px;top:89.2px;transform:scaleX(0.9)">RPM:</span>
<span class="t" style="left:66.8px;top:89.2px;transform:scaleX(0.92)">5040</span>
<span class="t" style="left:1.2px;top:106.8px;transform:scaleX(0.9)">Sector:</span>
<span class="t" style="left:66.8px;top:106.8px;transform:scaleX(0.92)">512b</span>
<span class="t" style="left:131.1px;top:1.4px;transform:scaleX(0.9)">Port 00:00</span>
<span class="t" style="left:197.1px;top:71.7px;transform:scaleX(0.9)">3.64 TiB</span>
</div>
<div id="status"></div>
<span class="t" style="left:16px;top:865px;transform:scaleX(0.8977);color:#000;">[2022-04-23 18:45:50] Error 0311CCE0 (E0) on Read Logical @ LBA 1023, block 1, 0.16 ms, 0'C (deg)</span>
<div id="edgeL"></div><div id="edgeR2"></div><div id="edgeB"></div>
</div>
</body></html>
